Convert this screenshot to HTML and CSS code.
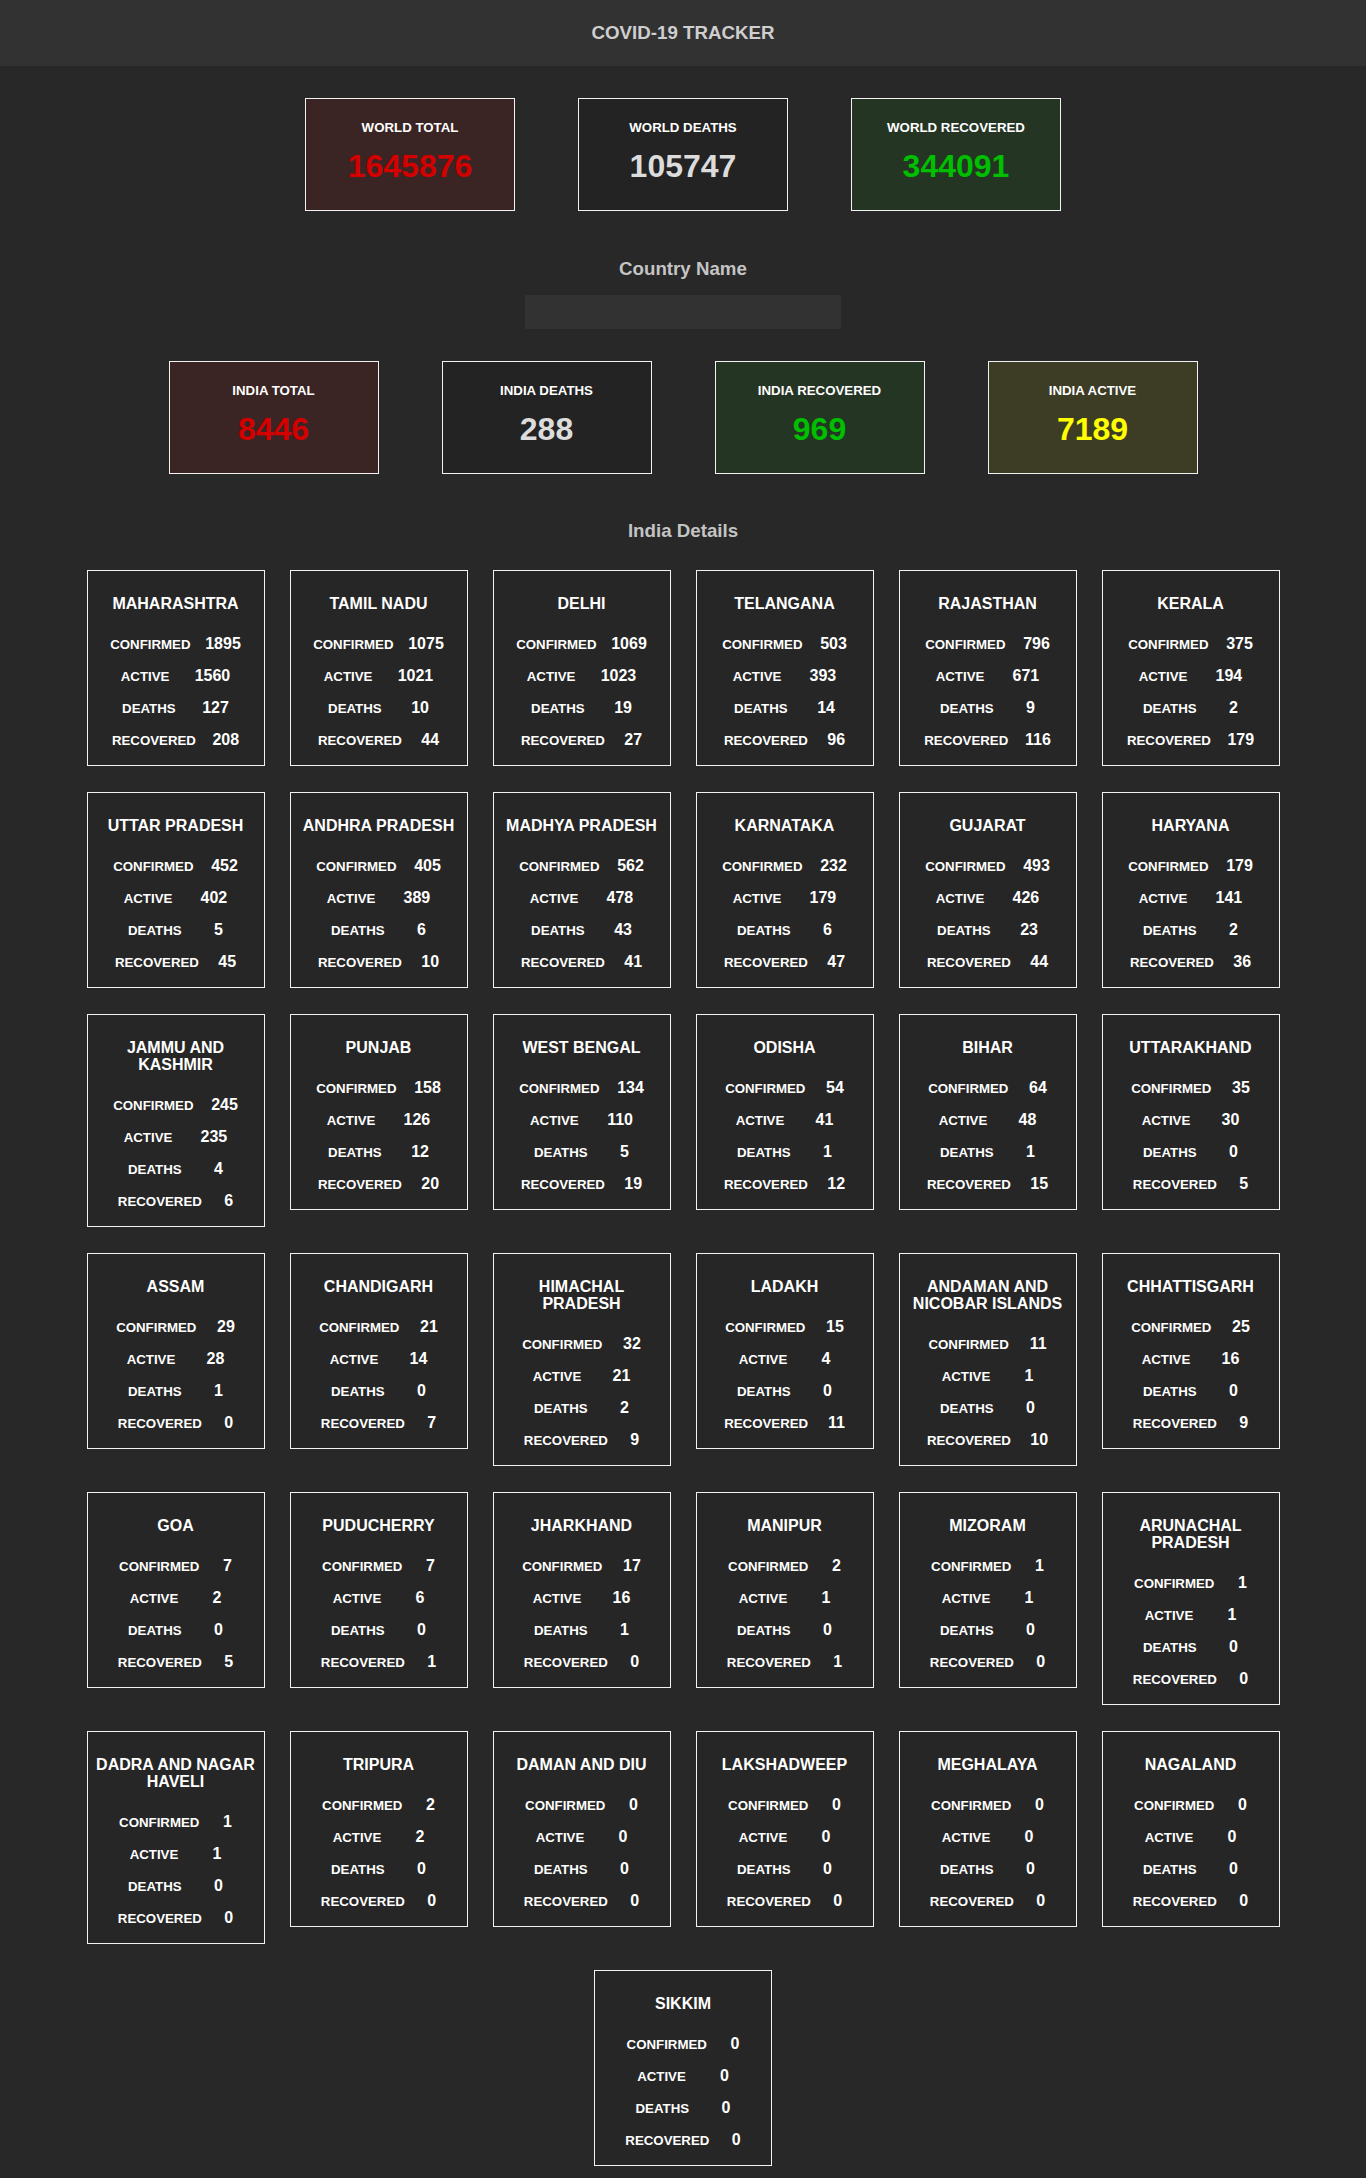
FILE: index.html
```html
<!DOCTYPE html>
<html>
<head>
<meta charset="utf-8">
<title>COVID-19 Tracker</title>
<link rel="stylesheet" href="styles.css">
</head>
<body>
<header class="topbar"><h3 class="brand">COVID-19 TRACKER</h3></header>

<section class="summary world">
  <div class="stat stat-total"><h5>WORLD TOTAL</h5><h1>1645876</h1></div>
  <div class="stat stat-deaths"><h5>WORLD DEATHS</h5><h1>105747</h1></div>
  <div class="stat stat-recovered"><h5>WORLD RECOVERED</h5><h1>344091</h1></div>
</section>

<h3 class="section-title country-title">Country Name</h3>
<div class="search"><input class="country-input" type="text"></div>

<section class="summary india">
  <div class="stat stat-total"><h5>INDIA TOTAL</h5><h1>8446</h1></div>
  <div class="stat stat-deaths"><h5>INDIA DEATHS</h5><h1>288</h1></div>
  <div class="stat stat-recovered"><h5>INDIA RECOVERED</h5><h1>969</h1></div>
  <div class="stat stat-active"><h5>INDIA ACTIVE</h5><h1>7189</h1></div>
</section>

<h3 class="section-title details-title">India Details</h3>

<section class="states" id="states"></section>

<script src="app.js"></script>
</body>
</html>
```

FILE: app.js
```js
var data = [
  ["MAHARASHTRA",1895,1560,127,208],
  ["TAMIL NADU",1075,1021,10,44],
  ["DELHI",1069,1023,19,27],
  ["TELANGANA",503,393,14,96],
  ["RAJASTHAN",796,671,9,116],
  ["KERALA",375,194,2,179],
  ["UTTAR PRADESH",452,402,5,45],
  ["ANDHRA PRADESH",405,389,6,10],
  ["MADHYA PRADESH",562,478,43,41],
  ["KARNATAKA",232,179,6,47],
  ["GUJARAT",493,426,23,44],
  ["HARYANA",179,141,2,36],
  ["JAMMU AND KASHMIR",245,235,4,6],
  ["PUNJAB",158,126,12,20],
  ["WEST BENGAL",134,110,5,19],
  ["ODISHA",54,41,1,12],
  ["BIHAR",64,48,1,15],
  ["UTTARAKHAND",35,30,0,5],
  ["ASSAM",29,28,1,0],
  ["CHANDIGARH",21,14,0,7],
  ["HIMACHAL PRADESH",32,21,2,9],
  ["LADAKH",15,4,0,11],
  ["ANDAMAN AND NICOBAR ISLANDS",11,1,0,10],
  ["CHHATTISGARH",25,16,0,9],
  ["GOA",7,2,0,5],
  ["PUDUCHERRY",7,6,0,1],
  ["JHARKHAND",17,16,1,0],
  ["MANIPUR",2,1,0,1],
  ["MIZORAM",1,1,0,0],
  ["ARUNACHAL PRADESH",1,1,0,0],
  ["DADRA AND NAGAR HAVELI",1,1,0,0],
  ["TRIPURA",2,2,0,0],
  ["DAMAN AND DIU",0,0,0,0],
  ["LAKSHADWEEP",0,0,0,0],
  ["MEGHALAYA",0,0,0,0],
  ["NAGALAND",0,0,0,0],
  ["SIKKIM",0,0,0,0]
];
var labels = ["CONFIRMED","ACTIVE","DEATHS","RECOVERED"];
var html = "";
data.forEach(function (s) {
  html += '<div class="state"><h4 class="state-name">' + s[0] + '</h4>';
  for (var i = 0; i < 4; i++) {
    html += '<div class="row"><span class="label">' + labels[i] + '</span><span class="value">' + s[i + 1] + '</span></div>';
  }
  html += '</div>';
});
document.getElementById("states").innerHTML = html;
```

FILE: styles.css
```css
html, body {
  margin: 0;
  padding: 0;
}
body {
  background: #282828;
  font-family: "Liberation Sans", Arial, sans-serif;
  color: #fff;
  padding-bottom: 6px;
}
h1, h3, h4, h5 {
  margin: 0;
  font-weight: bold;
}
.topbar {
  height: 66px;
  background: #323232;
  display: flex;
  align-items: center;
  justify-content: center;
}
.brand {
  font-size: 18.72px;
  color: #cfcfcf;
  line-height: 22px;
}
.summary {
  display: flex;
  justify-content: center;
  gap: 63px;
}
.world {
  margin-top: 32px;
}
.india {
  margin-top: 32px;
}
.stat {
  width: 208px;
  border: 1px solid #f2f2f2;
  padding: 21px 0 26px;
  text-align: center;
}
.stat h5 {
  font-size: 13.28px;
  line-height: 16px;
  color: #fff;
}
.stat h1 {
  font-size: 32px;
  line-height: 36px;
  margin-top: 12px;
}
.stat-total { background: #3a2424; }
.stat-total h1 { color: #d40000; }
.stat-deaths { background: #232323; }
.stat-deaths h1 { color: #dcdcdc; }
.stat-recovered { background: #253524; }
.stat-recovered h1 { color: #00bf00; }
.stat-active { background: #3d3d26; }
.stat-active h1 { color: #ffff00; }

.section-title {
  font-size: 18.72px;
  line-height: 22px;
  color: #c4c4c4;
  text-align: center;
}
.country-title {
  margin-top: 47px;
}
.search {
  display: flex;
  justify-content: center;
  margin-top: 15px;
}
.country-input {
  width: 316px;
  height: 34px;
  box-sizing: border-box;
  border: none;
  background: #323232;
  outline: none;
  color: #fff;
  padding: 0 8px;
  margin: 0;
}
.details-title {
  margin-top: 46px;
}
.states {
  margin: 28px auto 0;
  width: 1193px;
  display: flex;
  flex-wrap: wrap;
  justify-content: center;
  align-items: flex-start;
  gap: 26px 25px;
}
.state {
  width: 160px;
  border: 1px solid #f2f2f2;
  background: #262626;
  padding: 24px 8px 9px;
}
.state-name {
  font-size: 16px;
  line-height: 17px;
  text-align: center;
  color: #fff;
  margin: 0 -1px 16px;
}
.row {
  height: 32px;
  display: flex;
  align-items: center;
  justify-content: space-evenly;
}
.label {
  font-size: 13.28px;
  font-weight: bold;
  color: #fff;
}
.value {
  font-size: 16px;
  font-weight: bold;
  color: #fff;
}
```
